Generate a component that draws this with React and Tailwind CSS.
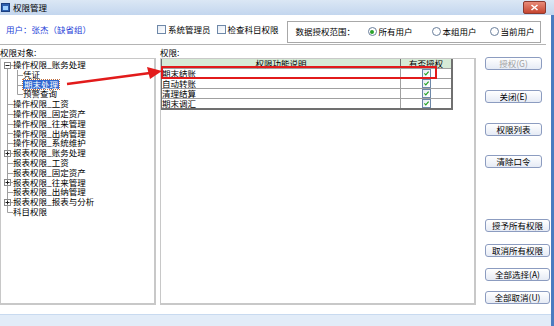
import React from "react";

const font = { fontFamily: '"Noto Sans CJK SC", "Liberation Sans", sans-serif' };

function Btn({ children, disabled, wide }) {
  return (
    <div
      className={`h-[13px] ${wide ? "w-[65px]" : "w-[57px]"} flex items-center justify-center rounded-[3px] border border-[#8c9cc0] bg-gradient-to-b from-[#ffffff] to-[#e6ebf5] text-[8.5px] leading-[11px] ${disabled ? "text-[#a0a0a0]" : "text-black"}`}
    >
      <span className="block h-[11px] leading-[11px] overflow-hidden">{children}</span>
    </div>
  );
}

function Check({ checked }) {
  return (
    <span className="inline-block shrink-0 w-[9px] h-[9px] border border-[#6e88a8] bg-gradient-to-br from-[#e6ecf5] to-white relative">
      {checked && (
        <svg viewBox="0 0 9 9" className="absolute inset-0 w-full h-full">
          <path d="M1.8 4.3 L3.6 6.2 L7.2 2" stroke="#1fa01f" strokeWidth="1.4" fill="none" />
        </svg>
      )}
    </span>
  );
}

function Radio({ checked }) {
  return (
    <span className="inline-flex shrink-0 w-[9px] h-[9px] rounded-full border border-[#6a7f9c] bg-white items-center justify-center">
      {checked && <span className="w-[4px] h-[4px] rounded-full bg-[#2aa22a]" />}
    </span>
  );
}

const treeRows = [
  { t: "操作权限_账务处理", lvl: 0, box: "minus" },
  { t: "凭证", lvl: 1 },
  { t: "期末处理", lvl: 1, sel: true },
  { t: "预警查询", lvl: 1, last: true },
  { t: "操作权限_工资", lvl: 0 },
  { t: "操作权限_固定资产", lvl: 0 },
  { t: "操作权限_往来管理", lvl: 0 },
  { t: "操作权限_出纳管理", lvl: 0 },
  { t: "操作权限_系统维护", lvl: 0 },
  { t: "报表权限_账务处理", lvl: 0, box: "plus" },
  { t: "报表权限_工资", lvl: 0 },
  { t: "报表权限_固定资产", lvl: 0 },
  { t: "报表权限_往来管理", lvl: 0, box: "plus" },
  { t: "报表权限_出纳管理", lvl: 0 },
  { t: "报表权限_报表与分析", lvl: 0, box: "plus" },
  { t: "科目权限", lvl: 0, last: true },
];

function Connector({ row, idx }) {
  const h = 10;
  const isFirst = idx === 0;
  return (
    <svg width={row.lvl === 1 ? 22 : 12} height={h} className="shrink-0">
      {row.lvl === 0 && (
        <>
          <line x1="6.5" y1={isFirst ? 5 : 0} x2="6.5" y2={row.last ? 5.5 : h} stroke="#a0a0a0" strokeWidth="1" />
          <line x1="6.5" y1="5.5" x2="12" y2="5.5" stroke="#a0a0a0" strokeWidth="1" />
          {row.box && (
            <>
              <rect x="3.5" y="2.5" width="6" height="6" fill="white" stroke="#8a8a8a" strokeWidth="1" />
              <line x1="4.5" y1="5.5" x2="8.5" y2="5.5" stroke="#222" strokeWidth="1" />
              {row.box === "plus" && <line x1="6.5" y1="3.5" x2="6.5" y2="7.5" stroke="#222" strokeWidth="1" />}
            </>
          )}
        </>
      )}
      {row.lvl === 1 && (
        <>
          <line x1="6.5" y1="0" x2="6.5" y2={h} stroke="#a0a0a0" strokeWidth="1" />
          <line x1="16.5" y1="0" x2="16.5" y2={row.last ? 5.5 : h} stroke="#a0a0a0" strokeWidth="1" />
          <line x1="16.5" y1="5.5" x2="22" y2="5.5" stroke="#a0a0a0" strokeWidth="1" />
        </>
      )}
    </svg>
  );
}

export default function App() {
  const perms = ["期末结账", "自动转账", "清理结算", "期末调汇"];
  return (
    <div className="w-[554px] h-[326px] bg-white relative overflow-hidden text-black" style={font}>
      {/* title bar */}
      <div className="h-[15px] flex items-center bg-gradient-to-b from-[#dbe7f5] to-[#c3d6ee]">
        <div className="w-[9px] h-[9px] ml-[1px] bg-[#2d5fae] border border-[#1c3f80] flex items-center justify-center">
          <span className="w-[5px] h-[4px] bg-[#9fd0ff]" />
        </div>
        <span className="ml-[3px] text-[8.5px] leading-[11px] block h-[11px]">权限管理</span>
        <div className="ml-auto mr-[8px] w-[23px] h-[13px] rounded-[2px] border border-[#8a3a30] bg-gradient-to-b from-[#e88a78] to-[#c5442f] flex items-center justify-center">
          <svg width="9" height="7" viewBox="0 0 9 7">
            <path d="M1.5 1 L7.5 6 M7.5 1 L1.5 6" stroke="white" strokeWidth="1.6" />
          </svg>
        </div>
      </div>

      {/* top row */}
      <div className="h-[29px] flex items-center text-[8.5px] leading-[11px]">
        <span className="ml-[6px] text-[#1f3fd8] w-[151px] block h-[11px]">用户：张杰（缺省组）</span>
        <div className="flex items-center gap-[2px]">
          <Check />
          <span className="block h-[11px]">系统管理员</span>
        </div>
        <div className="flex items-center gap-[2px] ml-[6px]">
          <Check />
          <span className="block h-[11px]">检查科目权限</span>
        </div>
        <div className="ml-[8px] w-[254px] h-[22px] border border-[#a8a8a8] flex items-center mt-[4px]">
          <span className="ml-[8px] w-[72px] block h-[11px]">数据授权范围：</span>
          <div className="flex items-center gap-[2px]">
            <Radio checked />
            <span className="block h-[11px]">所有用户</span>
          </div>
          <div className="flex items-center gap-[2px] ml-[19px]">
            <Radio />
            <span className="block h-[11px]">本组用户</span>
          </div>
          <div className="flex items-center gap-[2px] ml-[13px]">
            <Radio />
            <span className="block h-[11px]">当前用户</span>
          </div>
        </div>
      </div>
      <div className="w-[546px] border-t border-[#b4b4b4]" />

      {/* lower area */}
      <div className="flex mt-[1px] text-[8.5px]">
        <div className="w-[156px]">
          <div className="h-[12px] leading-[12px]">权限对象:</div>
          <div className="h-[247px] border border-[#c8c8c8] border-r-[2px] border-b-[2px] bg-white pt-[1px]">
            {treeRows.map((r, i) => (
              <div key={i} className="flex items-center h-[9.8px]">
                <Connector row={r} idx={i} />
                <span
                  className={`block h-[9.8px] leading-[9.8px] ${r.sel ? "bg-[#3168d0] text-white px-[1px] outline outline-1 outline-dotted outline-[#c07040]" : ""}`}
                >
                  {r.t}
                </span>
              </div>
            ))}
          </div>
        </div>
        <div className="w-[316px] ml-[4px]">
          <div className="h-[12px] leading-[12px]">权限:</div>
          <div className="h-[247px] border border-[#c8c8c8] border-r-[2px] border-b-[2px] bg-white">
            <div className="w-[292px] border border-[#707070] border-t-0 border-r-[2px] border-b-[2px]">
              <div className="flex h-[9px] bg-[#d6ead6]">
                <div className="w-[239px] border-r border-[#707070] flex justify-center">
                  <span className="block h-[9px] leading-[9px]">权限功能说明</span>
                </div>
                <div className="flex-1 flex justify-center">
                  <span className="block h-[9px] leading-[9px]">有否授权</span>
                </div>
              </div>
              {perms.map((p) => (
                <div key={p} className="flex h-[10px] border-t border-[#a0a0a0]">
                  <div className="w-[239px] border-r border-[#a0a0a0]">
                    <span className="block h-[9px] leading-[9px]">{p}</span>
                  </div>
                  <div className="flex-1 flex items-center justify-center">
                    <Check checked />
                  </div>
                </div>
              ))}
            </div>
          </div>
        </div>
        <div className="ml-[9px] flex flex-col pt-[11px]">
          <Btn disabled>授权(G)</Btn>
          <div className="mt-[20px]"><Btn>关闭(E)</Btn></div>
          <div className="mt-[20px]"><Btn>权限列表</Btn></div>
          <div className="mt-[19px]"><Btn>清除口令</Btn></div>
          <div className="mt-[51px]"><Btn wide>授予所有权限</Btn></div>
          <div className="mt-[12px]"><Btn wide>取消所有权限</Btn></div>
          <div className="mt-[11px]"><Btn wide>全部选择(A)</Btn></div>
          <div className="mt-[10px]"><Btn wide>全部取消(U)</Btn></div>
        </div>
      </div>

      {/* window frame pieces */}
      <div className="absolute right-0 top-[15px] bottom-0 w-[3px] bg-[#4a7cc0]" />
      <div className="absolute left-0 right-[3px] bottom-0 h-[12px] bg-[#e2ecf8] border-t border-[#c8daf0]" />

      {/* red highlight + arrow */}
      <div className="absolute left-[161px] top-[66px] w-[276px] h-[13px] border-2 border-[#e21b1b]" />
      <svg className="absolute left-0 top-0" width="554" height="326">
        <line x1="67" y1="84" x2="150" y2="73" stroke="#e21b1b" strokeWidth="2.5" />
        <polygon points="162,71 147,67 150,79" fill="#e21b1b" />
      </svg>
    </div>
  );
}
